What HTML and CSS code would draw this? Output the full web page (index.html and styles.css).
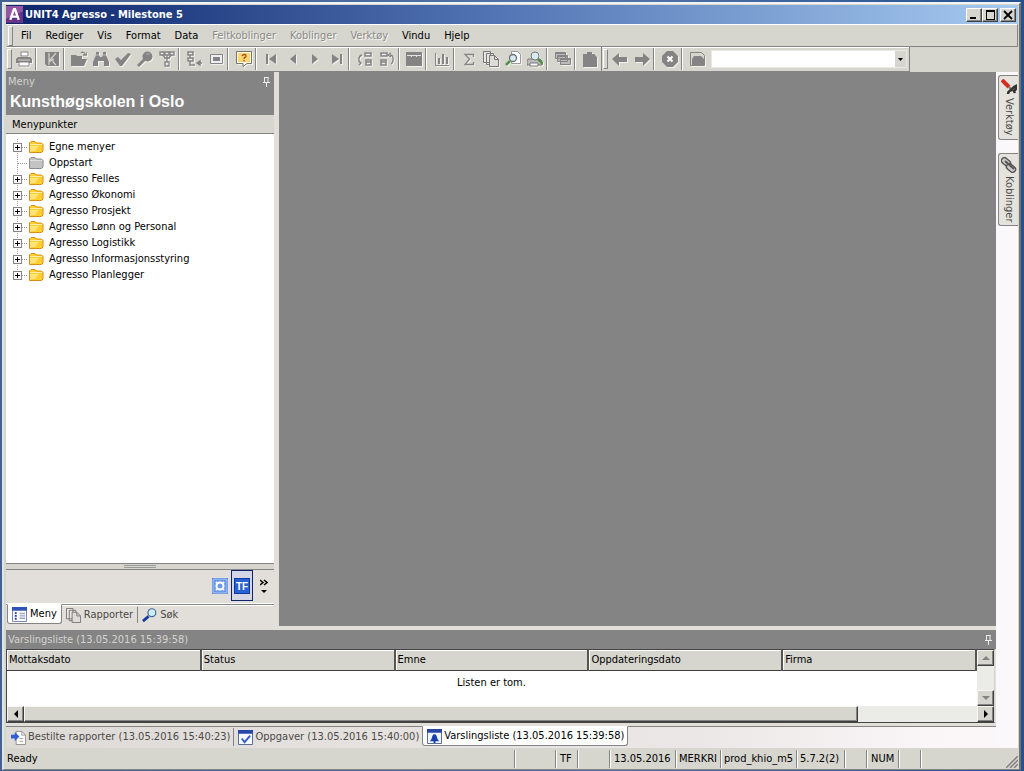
FILE: index.html
```html
<!DOCTYPE html>
<html lang="no">
<head>
<meta charset="utf-8">
<title>UNIT4 Agresso - Milestone 5</title>
<link rel="stylesheet" href="styles.css">
</head>
<body>
<svg class="defs" aria-hidden="true">
  <symbol id="print" viewBox="0 0 16 16"><path d="M5 1h7v4H5z" fill="#fff" stroke="#848484"/><path d="M2 6h12l2 2v4H0V8z" fill="#848484"/><path d="M2 9h12" stroke="#d6d3ce"/><path d="M3 11h10v4H3z" fill="#fff" stroke="#848484"/></symbol>
  <symbol id="save" viewBox="0 0 16 16"><path d="M1 1h14v14H3l-2-2z" fill="#848484"/><path d="M5 2v8l7-8M5 14v-3l4-3v3l3 3" fill="none" stroke="#d6d3ce" stroke-width="1.200"/></symbol>
  <symbol id="open" viewBox="0 0 16 16"><path d="M0 4h5l1 1h5v3h5l-3 7H0z" fill="#848484"/><path d="M10 2c2-2 4 0 4 2m-2 0h4V1" fill="none" stroke="#848484" stroke-width="1.500"/></symbol>
  <symbol id="find" viewBox="0 0 16 16"><path d="M3 1h3v3l1 2h2l1-2V1h3v3l3 7v4h-5v-5H5v5H0v-4l3-7z" fill="#848484"/><path d="M3 4h3m4 0h3" stroke="#d6d3ce" stroke-width=".7"/></symbol>
  <symbol id="tick" viewBox="0 0 16 16"><path d="M0 8l3-2 3 3 7-7 3 1-9 12H5z" fill="#848484"/></symbol>
  <symbol id="zoomkey" viewBox="0 0 16 16"><circle cx="10.500" cy="5.500" r="5" fill="#848484"/><path d="M8 8l-7 7" stroke="#848484" stroke-width="3"/><path d="M9 3h4" stroke="#aaa"/></symbol>
  <symbol id="flow" viewBox="0 0 16 16"><path d="M1 1h4v3H1zM6 1h4v3H6zM11 1h4v3h-4zM6 11h4v4H6zM3 4l5 4 5-4M8 4v7M5 7h6" fill="none" stroke="#848484" stroke-width="1.300"/></symbol>
  <symbol id="addnode" viewBox="0 0 16 16"><path d="M2 1h5v3H2zM2 7h5v3H2zM4 4v3m0 3v4h5M11 12h5m-5 0l3-2v4z" fill="none" stroke="#848484" stroke-width="1.500"/></symbol>
  <symbol id="box" viewBox="0 0 16 16"><path d="M2.500 3.500h12v9h-12z" fill="#eee" stroke="#848484"/><path d="M5 6h7v4H5z" fill="#848484"/></symbol>
  <symbol id="help" viewBox="0 0 16 16"><path d="M.5.500h15v12H11l-4 3v-3H.5z" fill="#fffbe6" stroke="#77746c"/><path d="M2 2h12v9H2z" fill="#ffd875"/><path d="M6 5C7 3 10 3 10 5c0 1.300-2 1-2 3m0 1v1.500" fill="none" stroke="#a5541c" stroke-width="1.400"/></symbol>
  <symbol id="first" viewBox="0 0 16 16"><path d="M3 3h2v10H3zM13 3v10L6 8z" fill="#848484"/></symbol>
  <symbol id="prev" viewBox="0 0 16 16"><path d="M11 3v10L5 8z" fill="#848484"/></symbol>
  <symbol id="next" viewBox="0 0 16 16"><path d="M5 3v10l6-5z" fill="#848484"/></symbol>
  <symbol id="last" viewBox="0 0 16 16"><path d="M11 3h2v10h-2zM3 3v10l7-5z" fill="#848484"/></symbol>
  <symbol id="linkl" viewBox="0 0 16 16"><path d="M8 2h6v3H8zM9 9h5v5H9z" fill="none" stroke="#848484" stroke-width="1.500"/><path d="M9 11h5M5 4c-4 1-4 7-1 8m-2-2l2 2-2 2" fill="none" stroke="#848484" stroke-width="1.300"/></symbol>
  <symbol id="linkr" viewBox="0 0 16 16"><path d="M2 2h6v3H2zM2 9h5v5H2z" fill="none" stroke="#848484" stroke-width="1.500"/><path d="M2 11h5M11 4c4 0 4 7 1 9m0-11L9 4l3 2" fill="none" stroke="#848484" stroke-width="1.300"/></symbol>
  <symbol id="pane" viewBox="0 0 16 16"><path d="M0 1h16v14H0z" fill="#848484"/><path d="M1 4.500h14M5.500 4v2m5-2v2" stroke="#e5e3df"/></symbol>
  <symbol id="chart" viewBox="0 0 16 16"><path d="M1.500 2v12.500H15" fill="none" stroke="#848484"/><path d="M4 7h2v6H4zM8 3h2v10H8zM12 6h2v7h-2z" fill="#848484"/></symbol>
  <symbol id="sum" viewBox="0 0 16 16"><path d="M12.500 6V3.500H4L8.500 8 4 13.500h8.500V11" fill="none" stroke="#848484" stroke-width="1.300"/></symbol>
  <symbol id="docs" viewBox="0 0 16 16"><path d="M.5.500h7v11h-7zM3.500 2.500h7v11h-7z" fill="#e8e6e2" stroke="#777"/><path d="M6.500 4.500h5l4 4v7h-9z" fill="#dedcd7" stroke="#777"/><path d="M11.500 4.500v4h4" fill="none" stroke="#777"/></symbol>
  <symbol id="preview" viewBox="0 0 16 16"><path d="M6.500.500h6l3 3v9h-9z" fill="#fff" stroke="#999"/><circle cx="8" cy="7" r="3.500" fill="#d8ebf2" stroke="#66757b" stroke-width="1.300"/><path d="M5 10l-4 4" stroke="#50914c" stroke-width="2.500"/></symbol>
  <symbol id="printview" viewBox="0 0 16 16"><path d="M1 8h12l2 2v4H0v-4z" fill="#bbb" stroke="#777"/><circle cx="8" cy="5" r="4" fill="#d8ebf2" stroke="#777"/><path d="M11 8l5 5" stroke="#50914c" stroke-width="2.500"/><path d="M3 12h8v3H3z" fill="#fff" stroke="#777"/></symbol>
  <symbol id="cards" viewBox="0 0 16 16"><path d="M.5 1.500h10v6H.5zM2.500 4.500h10v6h-10zM5.500 7.500h10v6h-10z" fill="#bbb" stroke="#848484"/><path d="M1 2.500h9M3 5.500h9M6 8.500h9" stroke="#848484"/></symbol>
  <symbol id="clip" viewBox="0 0 16 16"><path d="M1 3h4V1h5v2h2l3 3v10H1z" fill="#848484"/></symbol>
  <symbol id="back" viewBox="0 0 16 16"><path d="M0 8l7-6v4h8v5H7v4z" fill="#848484"/></symbol>
  <symbol id="forward" viewBox="0 0 16 16"><path d="M16 8L9 2v4H1v5h8v4z" fill="#848484"/></symbol>
  <symbol id="stop" viewBox="0 0 16 16"><path d="M5 0h6l5 5v6l-5 5H5l-5-5V5z" fill="#848484"/><path d="M5.500 5.500l5 5m0-5l-5 5" stroke="#fff" stroke-width="2"/></symbol>
  <symbol id="home" viewBox="0 0 16 16"><path d="M.5 1.500h11l3 3v10H.5z" fill="#d6d5ce" stroke="#848484"/><path d="M2 8l2-3h7l3 3v6H2z" fill="#848484"/></symbol>
  <symbol id="folder" viewBox="0 0 16 14"><path d="M1.500 12.500V3L3 1.500h4L8.500 3h5L15 4.500V11l-1.500 1.500z" fill="#ffd02c" stroke="#dc8a19"/><path d="M2 4.500h12" fill="none" stroke="#ffeeb0"/><path d="M2 11.500V6h9l-4 5z" fill="#ffe27a"/></symbol>
  <symbol id="folderoff" viewBox="0 0 16 14"><path d="M1.500 12.500V3L3 1.500h4L8.500 3h5L15 4.500V11l-1.500 1.500z" fill="#c3c3c3" stroke="#8a8a8a"/><path d="M2 4.500h12" stroke="#ddd"/></symbol>
  <symbol id="pin" viewBox="0 0 9 11"><path d="M2.500 1v5M1 6.500h7M2.500 1.500h4M6 1v5M4.500 7v4" stroke="#eee" fill="none"/></symbol>
  <symbol id="menu" viewBox="0 0 16 16"><path d="M.5.500h15v15H.5z" fill="#fff" stroke="#6d7db9"/><path d="M0 0h16v4H0z" fill="#3153b5"/><path d="M3 6.500h2m-2 3h2m-2 3h2" stroke="#173da8" stroke-width="2"/><path d="M8 7h6M8 9.500h6M8 12h6" stroke="#9ba4c3" stroke-width="1.500"/></symbol>
  <symbol id="lens" viewBox="0 0 16 16"><circle cx="10.500" cy="5" r="4.200" fill="#caf0f7" stroke="#456d93" stroke-width="1.300"/><path d="M7 9l-6 5" stroke="#173c99" stroke-width="3"/></symbol>
  <symbol id="report" viewBox="0 0 16 16"><path d="M5.500 1.500h6l4 4v10h-10z" fill="#fff" stroke="#8e8e8e"/><path d="M11.500 1.500v4h4M9 9h4m-4 3h4" fill="none" stroke="#999"/><path d="M0 5h4V2l5 5-5 5V9H0z" fill="#315fd2"/></symbol>
  <symbol id="task" viewBox="0 0 16 16"><path d="M.5 1.500h15v14H.5z" fill="#f5f9ff" stroke="#4c608e"/><path d="M0 0h16v4H0z" fill="#2746a5"/><path d="M4 9l3 4 6-7" fill="none" stroke="#315cc7" stroke-width="2"/></symbol>
  <symbol id="bell" viewBox="0 0 16 16"><path d="M.5 1.500h15v14H.5z" fill="#f0f5ff" stroke="#4c608e"/><path d="M0 0h16v4H0z" fill="#2746a5"/><path d="M3 13c2-1 2-4 3-6 1-2 3-2 4 0s1 5 3 6zM7 13h2v2H7z" fill="#173eae"/></symbol>
  <symbol id="hammer" viewBox="0 0 16 16"><path d="M1 1l7 7" stroke="#d22d22" stroke-width="4"/><path d="M8 8l4 4" stroke="#777" stroke-width="2"/><path d="M7 15c0-3 2-3 3-4l3-3 2-1v3l-2 2 1 2" fill="none" stroke="#333" stroke-width="2.500"/></symbol>
  <symbol id="chain" viewBox="0 0 16 16"><g fill="#ccc" stroke="#555" stroke-width="1.400"><rect x="0" y="2" width="10" height="6" rx="3" transform="rotate(40 5 5)"/><rect x="5" y="8" width="10" height="6" rx="3" transform="rotate(40 10 11)"/><path d="M4 4l9 8" stroke-width="2"/></g></symbol>
</svg>
<div class="window">
  <header class="titlebar">
    <svg class="logo" viewBox="0 0 16 16"><path d="M0 0h16v16H0z" fill="#653487"/><path d="M0 0h16v5L0 12z" fill="#9256a4"/><path d="M4 13L7.500 3h1L12 13M5.500 10h5" fill="none" stroke="#fff" stroke-width="2.200"/></svg>
    <h1>UNIT4 Agresso - Milestone 5</h1>
    <button class="winbtn" aria-label="Minimer"><svg viewBox="0 0 12 10"><path d="M2 7h6v2H2z"/></svg></button>
    <button class="winbtn" aria-label="Maksimer"><svg viewBox="0 0 12 10"><path d="M2 0h9v10H2zM3 2v7h7V2z" fill-rule="evenodd"/></svg></button>
    <button class="winbtn close" aria-label="Lukk"><svg viewBox="0 0 12 10"><path d="M2 1l8 8M10 1L2 9" stroke="#000" stroke-width="1.800"/></svg></button>
  </header>
  <nav class="menubar" aria-label="Hovedmeny">
    <button>Fil</button><button>Rediger</button><button>Vis</button><button>Format</button><button>Data</button><button disabled>Feltkoblinger</button><button disabled>Koblinger</button><button disabled>Verktøy</button><button>Vindu</button><button>Hjelp</button>
  </nav>
  <div class="toolbars">
    <div class="toolbar" role="toolbar" aria-label="Verktøylinje">
      <button aria-label="Skriv ut"><svg><use href="#print"/></svg></button><i class="sep"></i>
      <button aria-label="Lagre"><svg><use href="#save"/></svg></button><i class="sep tight"></i>
      <button aria-label="Åpne"><svg><use href="#open"/></svg></button><button aria-label="Finn"><svg><use href="#find"/></svg></button><button aria-label="Godta"><svg><use href="#tick"/></svg></button><button aria-label="Søk"><svg><use href="#zoomkey"/></svg></button><button aria-label="Flyt"><svg><use href="#flow"/></svg></button><i class="sep tight"></i>
      <button aria-label="Ny node"><svg><use href="#addnode"/></svg></button><button aria-label="Ramme"><svg><use href="#box"/></svg></button><i class="sep"></i>
      <button aria-label="Hjelp"><svg><use href="#help"/></svg></button><i class="sep tight"></i>
      <button aria-label="Første"><svg><use href="#first"/></svg></button><button aria-label="Forrige"><svg><use href="#prev"/></svg></button><button aria-label="Neste"><svg><use href="#next"/></svg></button><button aria-label="Siste"><svg><use href="#last"/></svg></button><i class="sep"></i>
      <button aria-label="Koble inn"><svg><use href="#linkl"/></svg></button><button aria-label="Koble ut"><svg><use href="#linkr"/></svg></button><i class="sep tight"></i>
      <button aria-label="Panel"><svg><use href="#pane"/></svg></button><i class="sep"></i>
      <button aria-label="Diagram"><svg><use href="#chart"/></svg></button><i class="sep tight"></i>
      <button aria-label="Sum"><svg><use href="#sum"/></svg></button><button aria-label="Dokumenter"><svg><use href="#docs"/></svg></button><button aria-label="Forhåndsvis"><svg><use href="#preview"/></svg></button><button aria-label="Vis utskrift"><svg><use href="#printview"/></svg></button><i class="sep"></i>
      <button aria-label="Vinduer"><svg><use href="#cards"/></svg></button><i class="sep tight"></i>
      <button aria-label="Lim inn"><svg><use href="#clip"/></svg></button>
    </div>
    <div class="toolbar address" role="toolbar" aria-label="Navigering">
      <button aria-label="Tilbake"><svg><use href="#back"/></svg></button><button aria-label="Frem"><svg><use href="#forward"/></svg></button><i class="sep"></i>
      <button aria-label="Stopp"><svg><use href="#stop"/></svg></button><i class="sep"></i>
      <button aria-label="Hjem"><svg><use href="#home"/></svg></button>
      <div class="combo"><select aria-label="Adresse"><option></option></select><svg viewBox="0 0 5 3"><path d="M0 0h5L2.500 3z"/></svg></div>
    </div>
  </div>
  <div class="body">
    <div class="work">
      <div class="upper">
        <aside class="side">
          <div class="sidehead"><div class="caption"><span>Meny</span><button class="pin" aria-label="Fest"><svg><use href="#pin"/></svg></button></div><h2>Kunsthøgskolen i Oslo</h2></div>
          <h3>Menypunkter</h3>
          <ul class="tree">
            <li><button aria-label="Utvid"></button><svg><use href="#folder"/></svg><span>Egne menyer</span></li>
            <li class="leaf"><svg><use href="#folderoff"/></svg><span>Oppstart</span></li>
            <li><button aria-label="Utvid"></button><svg><use href="#folder"/></svg><span>Agresso Felles</span></li>
            <li><button aria-label="Utvid"></button><svg><use href="#folder"/></svg><span>Agresso Økonomi</span></li>
            <li><button aria-label="Utvid"></button><svg><use href="#folder"/></svg><span>Agresso Prosjekt</span></li>
            <li><button aria-label="Utvid"></button><svg><use href="#folder"/></svg><span>Agresso Lønn og Personal</span></li>
            <li><button aria-label="Utvid"></button><svg><use href="#folder"/></svg><span>Agresso Logistikk</span></li>
            <li><button aria-label="Utvid"></button><svg><use href="#folder"/></svg><span>Agresso Informasjonsstyring</span></li>
            <li><button aria-label="Utvid"></button><svg><use href="#folder"/></svg><span>Agresso Planlegger</span></li>
          </ul>
          <div class="grabber"><i></i></div>
          <div class="shortcuts">
            <button aria-label="Oppsett"><svg viewBox="0 0 16 16"><path d="M0 0h16v16H0z" fill="#4f7fdb"/><path d="M1 1h14v14H1z" fill="#6c99e8" stroke="#a7c3f4"/><circle cx="8" cy="8" r="3.500" fill="none" stroke="#fff" stroke-width="2"/><path d="M4 4l1 1m6 6l1 1m0-8l-1 1m-6 6l-1 1" stroke="#fff" stroke-width="2"/></svg></button>
            <button class="chosen"><span>TF</span></button>
            <button class="more" aria-label="Flere"><svg viewBox="0 0 8 14"><path d="M0 1l3 2.500L0 6M4 1l3 2.500L4 6" fill="none" stroke="#000" stroke-width="1.500"/><path d="M1 11h6l-3 3z"/></svg></button>
          </div>
          <div class="tabs sidetabs"><button class="active"><svg><use href="#menu"/></svg>Meny</button><button><svg><use href="#docs"/></svg>Rapporter</button><button><svg><use href="#lens"/></svg>Søk</button></div>
        </aside>
        <main class="canvas"></main>
      </div>
      <section class="alerts">
        <div class="caption"><span>Varslingsliste (13.05.2016 15:39:58)</span><button class="pin" aria-label="Fest"><svg><use href="#pin"/></svg></button></div>
        <div class="gridbox">
          <div class="listing">
            <table><thead><tr><th>Mottaksdato</th><th>Status</th><th>Emne</th><th>Oppdateringsdato</th><th>Firma</th></tr></thead><tbody><tr><td colspan="5">Listen er tom.</td></tr></tbody></table>
            <div class="vscroll"><button disabled aria-label="Opp"><svg viewBox="0 0 8 4"><path d="M0 4h8L4 0z"/></svg></button><button disabled aria-label="Ned"><svg viewBox="0 0 8 4"><path d="M0 0h8L4 4z"/></svg></button></div>
          </div>
          <div class="hscroll"><button aria-label="Venstre"><svg viewBox="0 0 4 8"><path d="M4 0v8L0 4z"/></svg></button><div class="track"><i class="thumb"></i></div><button aria-label="Høyre"><svg viewBox="0 0 4 8"><path d="M0 0v8l4-4z"/></svg></button></div>
        </div>
        <div class="tabs listtabs"><button><svg><use href="#report"/></svg>Bestilte rapporter (13.05.2016 15:40:23)</button><button><svg><use href="#task"/></svg>Oppgaver (13.05.2016 15:40:00)</button><button class="active"><svg><use href="#bell"/></svg>Varslingsliste (13.05.2016 15:39:58)</button></div>
      </section>
    </div>
    <div class="rail"><button><svg><use href="#hammer"/></svg>Verktøy</button><button><svg><use href="#chain"/></svg>Koblinger</button></div>
  </div>
  <footer class="status">
    <span class="ready">Ready</span><span class="w40"></span><span class="w22">TF</span><span class="w32"></span><span class="w66">13.05.2016</span><span class="w46">MERKRI</span><span class="w76">prod_khio_m5</span><span class="w48">5.7.2(2)</span><span class="w22"></span><span class="w32">NUM</span><span class="w22"></span><span class="end"><svg viewBox="0 0 12 12"><path d="M0 12L12 0M4 12l8-8M8 12l4-4" stroke="#848284" stroke-width="1.500"/></svg></span>
  </footer>
</div>
</body>
</html>
```
FILE: styles.css
```css
* { box-sizing: border-box; }
html, body { height: 100%; margin: 0; }
body { background: linear-gradient(90deg, #44618f, #5373a8 60%, #245290); padding: 2px 3px 1px 2px; color: #000; font: 11px/14px "DejaVu Sans Condensed", Tahoma, sans-serif; }
button { font: inherit; color: inherit; border: 0; background: none; padding: 0; margin: 0; }
svg { display: block; flex: none; width: 16px; height: 16px; }
h1, h2, h3, ul { margin: 0; padding: 0; }
.defs { position: absolute; width: 0; height: 0; }
.window { height: 100%; display: flex; flex-direction: column; background: #d6d5ce; border: solid; border-width: 2px 2px 1px 2px; border-color: #f1f4f5 #77736c #848484 #dce5ea; padding: 1px 1px 0 2px; }

.titlebar { height: 19px; flex: none; display: flex; align-items: center; padding: 0 2px 0 0; background: linear-gradient(90deg, #0b246b, #5577b6 50%, #a6caf0); color: #fff; }
.titlebar h1 { flex: 1; margin-left: 2px; font-size: 11px; font-weight: bold; }
.logo { width: 17px; height: 17px; }
.winbtn { width: 16px; height: 14px; display: grid; place-items: center; background: #d6d5ce; border: 1px solid; border-color: #fff #404040 #404040 #fff; box-shadow: inset -1px -1px #848484; }
.winbtn svg { width: 12px; height: 10px; }
.winbtn.close { margin-left: 2px; }

.menubar { height: 23px; flex: none; display: flex; align-items: center; padding-left: 7px; border: 1px solid; border-color: #fff #848484 #848484 transparent; }
.menubar::before, .toolbar::before { content: ""; width: 3px; height: 18px; border: 1px solid; border-color: #fff #848484 #848484 #fff; }
.menubar::before { margin-left: -6px; margin-right: 1px; }
.menubar button { padding: 0 7px; }
.menubar button:disabled { color: #8c8a86; text-shadow: 1px 1px #f8f8f8; }
.toolbars { height: 25px; flex: none; display: flex; }
.toolbar { display: flex; align-items: center; border: solid #848484; border-width: 0 1px 1px 0; box-shadow: inset 0 1px #fff; padding-left: 1px; }
.toolbar::before { margin-right: 1px; }
.toolbar button { width: 22px; height: 22px; display: grid; place-items: center; }
.toolbar button svg { filter: drop-shadow(1px 1px #f3f1ed); }
.sep { width: 6px; height: 22px; border-left: 1px solid #848484; box-shadow: inset 1px 0 #fff; }
.sep.tight { width: 5px; }
.combo { position: relative; width: 196px; height: 18px; margin: 0 2px; }
.combo select { width: 100%; height: 100%; appearance: none; border: 1px solid #e8e8e4; border-radius: 0; background: linear-gradient(90deg, #fff calc(100% - 11px), #d6d5ce 0); }
.combo svg { position: absolute; right: 4px; top: 8px; width: 5px; height: 3px; }

.body { flex: 1; min-height: 0; display: flex; }
.work { flex: 1; min-width: 0; display: flex; flex-direction: column; background: #e2dfda; }
.upper { flex: 1; min-height: 0; display: flex; gap: 5px; }
.side { width: 268px; flex: none; display: flex; flex-direction: column; }
.canvas { flex: 1; background: #848484; margin-bottom: 3px; }
.sidehead { background: #848484; height: 43px; }
.caption { height: 19px; flex: none; display: flex; justify-content: space-between; align-items: center; padding: 0 3px 0 2px; background: #848484; color: #d6d3ce; }
.pin svg { width: 9px; height: 11px; }
.side h2 { padding-left: 4px; font: bold 16px/22px "Liberation Sans", Arial, sans-serif; color: #fff; }
.side h3 { height: 19px; padding: 3px 6px; font-size: 11px; line-height: 14px; font-weight: normal; background: #d6d5ce; border-bottom: 1px solid #848484; }
.tree { flex: 1; list-style: none; padding: 5px 0 0 7px; background: #fff; }
.tree li { height: 16px; display: flex; align-items: center; background: repeating-linear-gradient(90deg, #999 0 1px, transparent 1px 2px) 5px 8px / 10px 1px no-repeat, repeating-linear-gradient(#999 0 1px, transparent 1px 2px) 4px 0 / 1px 100% no-repeat; }
.tree li:last-child { background-size: 10px 1px, 1px 8px; }
.tree button { width: 9px; height: 9px; margin-right: 6px; border: 1px solid #848484; background: linear-gradient(#000, #000) center / 5px 1px no-repeat, linear-gradient(#000, #000) center / 1px 5px no-repeat, #fff; }
.tree .leaf { padding-left: 15px; }
.tree svg { height: 14px; margin-right: 5px; }
.grabber { height: 7px; border-top: 1px solid #848484; border-bottom: 1px solid #848484; display: grid; place-items: center; background: #d6d5ce; }
.grabber i { width: 32px; height: 3px; border: solid #999; border-width: 1px 0; }
.shortcuts { height: 34px; display: flex; align-items: center; justify-content: flex-end; padding: 0 2px 2px 0; gap: 3px; border-bottom: 1px solid #fff; }
.shortcuts .chosen { width: 22px; height: 31px; display: grid; place-items: center; border: 1px solid #0b246b; background: #d4d5e5; }
.chosen span { width: 16px; height: 16px; background: #2860d5; border: 1px solid #083a9f; color: #fff; font: bold 10px/15px "Liberation Sans", sans-serif; }
.more { width: 16px; }
.more svg { width: 8px; height: 14px; margin: auto; }
.tabs { display: flex; color: #4b4a48; border-top: 1px solid #848484; }
.tabs button { display: flex; align-items: center; gap: 2px; height: 18px; padding: 0 3px 0 4px; border-right: 1px solid #848484; }
.tabs svg { width: 15px; height: 15px; }
.tabs .active { background: #fff; color: #000; border: 1px solid #848484; border-top-color: #fff; border-radius: 0 0 3px 3px; }
.tabs button:last-child:not(.active) { border-right: 0; }
.sidetabs { height: 25px; padding-left: 1px; box-shadow: inset 0 1px #fff; }
.sidetabs button { height: 16px; margin-top: 2px; padding-right: 4px; gap: 3px; }
.sidetabs .active { height: 20px; margin-top: -1px; }

.alerts { flex: none; display: flex; flex-direction: column; padding-top: 1px; }
.gridbox { border: 1px solid #444; border-right-color: #d6d5ce; margin-right: 1px; background: #fff; }
.listing { display: flex; height: 56px; }
table { flex: 1; width: 100%; height: 56px; border-collapse: collapse; table-layout: fixed; }
th { width: 20%; height: 20px; padding: 0 2px; font-weight: normal; text-align: left; background: #d6d5ce; border-right: 2px solid #555; border-bottom: 1px solid #404040; box-shadow: inset 1px 1px #fff; }
td { padding: 5px 0 0; text-align: center; vertical-align: top; }
.vscroll { width: 17px; flex: none; display: flex; flex-direction: column; justify-content: space-between; background: #ebece7; }
.vscroll button, .hscroll button { width: 17px; height: 16px; display: grid; place-items: center; background: #d6d5ce; border: 1px solid; border-color: #f5f5f2 #404040 #404040 #f5f5f2; box-shadow: inset -1px -1px #848484; }
.vscroll svg { width: 8px; height: 4px; fill: #848484; }
.hscroll { display: flex; height: 16px; }
.hscroll svg { width: 4px; height: 8px; }
.track { flex: 1; background: #ebece7; }
.thumb { display: block; width: 87.500%; height: 16px; background: #d6d5ce; border: 1px solid; border-color: #f5f5f2 #404040 #404040 #f5f5f2; box-shadow: inset -1px -1px #848484; }
.listtabs { height: 22px; margin-top: 3px; padding-left: 1px; background: linear-gradient(90deg, #dedad6, #eae7e6 70%, #fbf7f9 95%); }
.listtabs button { margin-top: 1px; }
.listtabs .active { height: 20px; margin-top: -1px; }
.listtabs button:nth-last-child(2) { border-right: 0; }

.rail { width: 22px; flex: none; display: flex; flex-direction: column; align-items: flex-end; gap: 13px; padding-top: 3px; background: #fbf8fb; }
.rail button { width: 20px; display: flex; align-items: center; gap: 3px; padding: 3px 0; writing-mode: vertical-rl; background: #e5e3de; border: 1px solid #848484; border-right: 0; border-radius: 3px 0 0 3px; color: #4b4a48; }
.rail svg { width: 16px; height: 16px; }

.status { height: 21px; flex: none; display: flex; align-items: center; padding: 1px 0; }
.status span { height: 18px; padding: 2px 0 0 4px; border-left: 1px solid #848484; box-shadow: inset 1px 0 #fff; white-space: nowrap; }
.status .ready { flex: 1; border: 0; box-shadow: none; padding-left: 1px; }
.status .w46, .status .w76, .status .w48 { padding-left: 3px; }
.w22 { width: 22px; } .w32 { width: 32px; } .w40 { width: 41px; } .w46 { width: 45px; } .w48 { width: 48px; } .w66 { width: 66px; } .w76 { width: 76px; }
.status .end { width: 98px; display: flex; justify-content: flex-end; align-items: flex-end; }
.end svg { width: 12px; height: 12px; }
```
